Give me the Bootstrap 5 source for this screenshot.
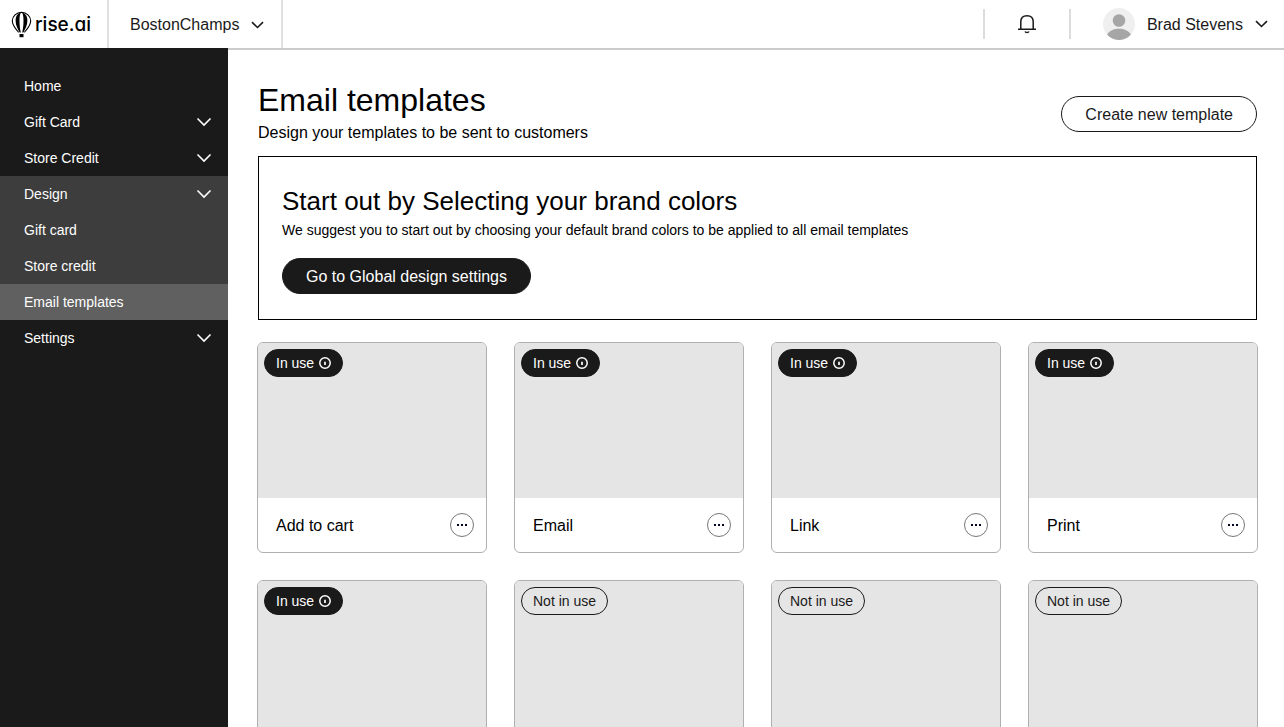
<!DOCTYPE html>
<html lang="en">
<head>
<meta charset="utf-8">
<meta name="viewport" content="width=device-width, initial-scale=1">
<title>Email templates</title>
<link rel="stylesheet" href="https://cdn.jsdelivr.net/npm/bootstrap@5.3.0/dist/css/bootstrap.min.css">
<style>
  :root { --ink: #1a1a1a; }
  body { font-family: "Liberation Sans", Arial, sans-serif; font-size: 16px; line-height: 24px; color: #000; }
  button { color: inherit; }
  svg { display: block; flex: none; fill: none; stroke: currentColor; }
  .topbar { height: 48px; color: var(--ink); }
  .logo { width: 109px; padding-left: 11px; border-right: 2px solid #e0e0e0; color: #000; gap: 3px; }
  .logo-name { font-family: Inter, sans-serif; font-feature-settings: "cv11"; font-size: 19px; font-weight: 500; padding-top: 2px; }
  .store-switch { padding: 2px 17px 0 21px; border-right: 2px solid #e0e0e0; gap: 12px; }
  .bell { height: 30px; width: 88px; border: solid #dcdcdc; border-width: 0 2px; }
  .profile { padding: 0 16px 0 32px; gap: 12px; }
  .profile-name { padding-top: 2px; }
  .side { width: 228px; background: var(--ink); padding-top: 20px; font-size: 14px; }
  .side-item { height: 36px; padding: 0 16px 0 24px; color: #fff; }
  .side-group { background: #3d3d3d; }
  .side-item.current { background: #606060; }
  .page { border-top: 2px solid #ccc; padding: 30px 26px 27px 29px; scrollbar-width: none; }
  .page::-webkit-scrollbar { display: none; }
  .page-head, .banner { margin: 0 1px; }
  .page-head h1 { font-size: 32px; line-height: 40px; font-weight: 400; }
  .page-head p { line-height: 26px; }
  .pill { height: 36px; padding: 2px 23px 0; border-radius: 18px; border: 1px solid var(--ink); background: #fff; color: var(--ink); }
  .pill-dark { background: var(--ink); color: #fff; }
  .page-head .pill { margin-bottom: 14px; }
  .banner { margin-top: 10px; padding: 28px 23px 25px; border: 1px solid #000; }
  .banner h2 { font-size: 26px; line-height: 32px; font-weight: 400; }
  .banner p { font-size: 14px; line-height: 26px; margin-bottom: 15px; }
  .templates { grid-template-columns: repeat(4, 1fr); gap: 27px; margin-top: 22px; }
  .template { border: 1px solid #b0b0b0; border-radius: 6px; }
  .preview { height: 155px; padding: 6px; background: #e5e5e5; }
  .status { height: 28px; padding: 0 11px; border-radius: 14px; font-size: 14px; gap: 5px; color: var(--ink); border: 1px solid var(--ink); }
  .status-on { background: var(--ink); color: #fff; }
  .template-foot { height: 54px; padding: 0 12px 0 18px; }
  .template-foot h3 { font-size: 16px; line-height: 24px; font-weight: 400; padding-top: 2px; }
  .more { width: 24px; height: 24px; border: 1px solid #777; border-radius: 50%; background: #fff; color: #000624; }
  @media (max-width: 900px) { .templates { grid-template-columns: repeat(2, 1fr); } }
</style>
</head>
<body class="vh-100 d-flex flex-column overflow-hidden">
<svg width="0" height="0" class="position-absolute" aria-hidden="true">
  <symbol id="chev" viewBox="0 0 16 10"><path d="M1.500 1.500 8 8l6.500-6.500" stroke-width="1.600"/></symbol>
  <symbol id="chev-top" viewBox="0 0 13 8"><path d="M1 1.200l5.500 5.300L12 1.200" stroke-width="1.600"/></symbol>
  <symbol id="info" viewBox="0 0 12 12"><circle cx="6" cy="6" r="5.200" stroke-width="1.500"/><path d="M6 4.800v3.200" stroke-width="1.700"/></symbol>
  <symbol id="dots" viewBox="0 0 12 4"><path d="M1 1h2v2H1zM5 1h2v2H5zM9 1h2v2H9z" fill="currentColor" stroke="none"/></symbol>
</svg>

<header class="topbar d-flex align-items-center bg-white flex-shrink-0">
  <a href="#" class="logo d-flex align-items-center h-100 text-decoration-none">
    <svg width="21" height="27" viewBox="0 0 21 27" aria-hidden="true">
      <path d="M7.600 21.300C5 18 1.300 15 1.300 9.800 1.300 5 5.500 1.400 10.500 1.400s9.200 3.600 9.200 8.400c0 5.200-3.700 8.200-6.300 11.500" stroke-width="1.100"/>
      <path d="M9.200 1.400C5.800 3 4.600 6 4.600 9.500c0 4.800 2.200 8.600 4 12h1.200C9 18 8.500 14.500 8.500 9.500c0-3.700.4-6 1.300-8.100zM11.800 1.400c3.400 1.600 4.600 4.600 4.600 8.100 0 4.800-2.200 8.600-4 12h-1.200c.8-3.500 1.300-7 1.300-12 0-3.700-.4-6-1.300-8.100z" fill="currentColor" stroke="none"/>
      <path d="M8.500 23h4v3.200h-4z" fill="currentColor" stroke="none"/>
    </svg>
    <span class="logo-name">rise.ai</span>
  </a>
  <button type="button" class="store-switch d-flex align-items-center h-100 bg-white border-top-0 border-bottom-0 border-start-0">
    BostonChamps
    <svg width="13" height="8"><use href="#chev-top"/></svg>
  </button>
  <div class="bell ms-auto d-flex align-items-center justify-content-center">
    <button type="button" class="border-0 bg-white p-0" aria-label="Notifications">
      <svg width="20" height="20" viewBox="0 0 20 20"><path d="M1 15.200h18M3.800 15V7.800Q3.800 1.700 10 1.700t6.200 6.100V15" stroke-width="1.500"/><path d="M8 17.500c.6 1.300 3.400 1.300 4 0" stroke-width="1.500"/></svg>
    </button>
  </div>
  <button type="button" class="profile d-flex align-items-center h-100 border-0 bg-white">
    <svg width="32" height="32" viewBox="0 0 32 32" aria-hidden="true">
      <g stroke="none">
        <circle cx="16" cy="16" r="16" fill="#efefef"/>
        <circle cx="16" cy="12.500" r="6.300" fill="#a6a6a6"/>
        <path d="M4 26.600C6.500 22.700 11 20.800 16 20.800s9.500 1.900 12 5.800A16 16 0 0 1 4 26.600z" fill="#a6a6a6"/>
      </g>
    </svg>
    <span class="profile-name">Brad Stevens</span>
    <svg width="13" height="8"><use href="#chev-top"/></svg>
  </button>
</header>

<div class="d-flex flex-grow-1 overflow-hidden">
  <nav class="side flex-shrink-0" aria-label="Main">
    <a class="side-item d-flex align-items-center justify-content-between text-decoration-none" href="#">Home</a>
    <a class="side-item d-flex align-items-center justify-content-between text-decoration-none" href="#">Gift Card <svg width="16" height="10"><use href="#chev"/></svg></a>
    <a class="side-item d-flex align-items-center justify-content-between text-decoration-none" href="#">Store Credit <svg width="16" height="10"><use href="#chev"/></svg></a>
    <div class="side-group">
      <a class="side-item d-flex align-items-center justify-content-between text-decoration-none" href="#">Design <svg width="16" height="10"><use href="#chev"/></svg></a>
      <a class="side-item d-flex align-items-center text-decoration-none" href="#">Gift card</a>
      <a class="side-item d-flex align-items-center text-decoration-none" href="#">Store credit</a>
      <a class="side-item current d-flex align-items-center text-decoration-none" href="#" aria-current="page">Email templates</a>
    </div>
    <a class="side-item d-flex align-items-center justify-content-between text-decoration-none" href="#">Settings <svg width="16" height="10"><use href="#chev"/></svg></a>
  </nav>

  <main class="page flex-grow-1 overflow-auto bg-white">
    <div class="page-head d-flex justify-content-between align-items-end">
      <div>
        <h1 class="mb-0">Email templates</h1>
        <p class="mb-0">Design your templates to be sent to customers</p>
      </div>
      <button type="button" class="pill">Create new template</button>
    </div>

    <section class="banner">
      <h2 class="mb-0">Start out by Selecting your brand colors</h2>
      <p>We suggest you to start out by choosing your default brand colors to be applied to all email templates</p>
      <button type="button" class="pill pill-dark">Go to Global design settings</button>
    </section>

    <div class="templates d-grid">
      <article class="template overflow-hidden">
        <div class="preview"><span class="status status-on d-inline-flex align-items-center">In use <svg width="12" height="12"><use href="#info"/></svg></span></div>
        <div class="template-foot d-flex align-items-center justify-content-between"><h3 class="mb-0">Add to cart</h3><button type="button" class="more d-flex align-items-center justify-content-center p-0" aria-label="More"><svg width="12" height="4"><use href="#dots"/></svg></button></div>
      </article>
      <article class="template overflow-hidden">
        <div class="preview"><span class="status status-on d-inline-flex align-items-center">In use <svg width="12" height="12"><use href="#info"/></svg></span></div>
        <div class="template-foot d-flex align-items-center justify-content-between"><h3 class="mb-0">Email</h3><button type="button" class="more d-flex align-items-center justify-content-center p-0" aria-label="More"><svg width="12" height="4"><use href="#dots"/></svg></button></div>
      </article>
      <article class="template overflow-hidden">
        <div class="preview"><span class="status status-on d-inline-flex align-items-center">In use <svg width="12" height="12"><use href="#info"/></svg></span></div>
        <div class="template-foot d-flex align-items-center justify-content-between"><h3 class="mb-0">Link</h3><button type="button" class="more d-flex align-items-center justify-content-center p-0" aria-label="More"><svg width="12" height="4"><use href="#dots"/></svg></button></div>
      </article>
      <article class="template overflow-hidden">
        <div class="preview"><span class="status status-on d-inline-flex align-items-center">In use <svg width="12" height="12"><use href="#info"/></svg></span></div>
        <div class="template-foot d-flex align-items-center justify-content-between"><h3 class="mb-0">Print</h3><button type="button" class="more d-flex align-items-center justify-content-center p-0" aria-label="More"><svg width="12" height="4"><use href="#dots"/></svg></button></div>
      </article>
      <article class="template overflow-hidden">
        <div class="preview"><span class="status status-on d-inline-flex align-items-center">In use <svg width="12" height="12"><use href="#info"/></svg></span></div>
      </article>
      <article class="template overflow-hidden">
        <div class="preview"><span class="status d-inline-flex align-items-center">Not in use</span></div>
      </article>
      <article class="template overflow-hidden">
        <div class="preview"><span class="status d-inline-flex align-items-center">Not in use</span></div>
      </article>
      <article class="template overflow-hidden">
        <div class="preview"><span class="status d-inline-flex align-items-center">Not in use</span></div>
      </article>
    </div>
  </main>
</div>
<script src="https://cdn.jsdelivr.net/npm/bootstrap@5.3.0/dist/js/bootstrap.bundle.min.js"></script>
</body>
</html>
